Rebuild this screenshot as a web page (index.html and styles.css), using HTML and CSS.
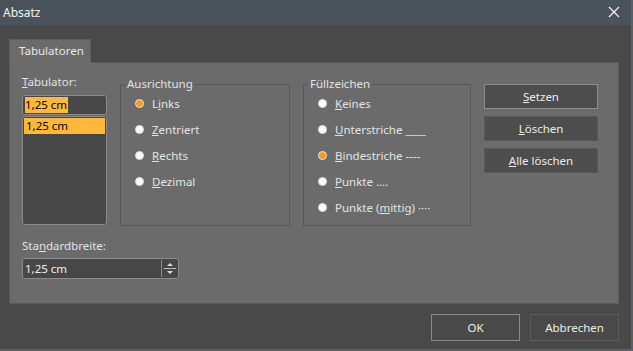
FILE: index.html
```html
<!DOCTYPE html>
<html lang="de">
<head>
	<meta charset="UTF-8">
	<title>Absatz</title>
	<link rel="stylesheet" href="styles.css">
</head>
<body>
<div class="window">
	<!-- Titelleiste -->
	<div class="titlebar">
		<span class="title">Absatz</span>
		<svg class="close" width="12" height="12" viewBox="0 0 12 12">
			<path d="M1 1 L11 11 M11 1 L1 11" stroke="#f2f2f2" stroke-width="1.2" fill="none"/>
		</svg>
	</div>
	<div class="content">
		<div class="tabs">
			<div class="tab">Tabulatoren</div>
		</div>
		<div class="panel">
			<div class="top-row">
				<div class="tab-col">
					<div class="label"><u>T</u>abulator:</div>
					<div class="tab-input"><span class="sel">1,25 cm</span></div>
					<div class="listbox">
						<div class="item selected">1,25 cm</div>
					</div>
				</div>
				<fieldset class="group align">
					<legend>Ausrichtung</legend>
					<div class="radio-row"><span class="radio checked"></span><span>L<u>i</u>nks</span></div>
					<div class="radio-row"><span class="radio"></span><span><u>Z</u>entriert</span></div>
					<div class="radio-row"><span class="radio"></span><span><u>R</u>echts</span></div>
					<div class="radio-row"><span class="radio"></span><span><u>D</u>ezimal</span></div>
				</fieldset>
				<fieldset class="group fill">
					<legend>Füllzeichen</legend>
					<div class="radio-row"><span class="radio"></span><span><u>K</u>eines</span></div>
					<div class="radio-row"><span class="radio"></span><span><u>U</u>nterstriche ____</span></div>
					<div class="radio-row"><span class="radio checked"></span><span><u>B</u>indestriche ----</span></div>
					<div class="radio-row"><span class="radio"></span><span><u>P</u>unkte ....</span></div>
					<div class="radio-row"><span class="radio"></span><span>Punkte (<u>m</u>ittig) ····</span></div>
				</fieldset>
				<div class="buttons">
					<div class="btn default"><u>S</u>etzen</div>
					<div class="btn"><u>L</u>öschen</div>
					<div class="btn"><u>A</u>lle löschen</div>
				</div>
			</div>
			<div class="label std-label">Sta<u>n</u>dardbreite:</div>
			<div class="spin">
				<span class="spin-value">1,25 cm</span>
				<span class="spin-arrows">
					<svg width="16" height="17" viewBox="0 0 16 17">
						<path d="M5 6 L8 3 L11 6 Z" fill="#dcdcdc"/>
						<path d="M2 8.5 L14 8.5" stroke="#bdbdbd" stroke-width="1"/>
						<path d="M5 11 L8 14 L11 11 Z" fill="#dcdcdc"/>
					</svg>
				</span>
			</div>
		</div>
		<div class="footer">
			<div class="btn big default">OK</div>
			<div class="btn big">Abbrechen</div>
		</div>
	</div>
</div>
</body>
</html>
```

FILE: styles.css
```css
*{
	box-sizing: border-box;
}
body{
	margin: 0;
	background: #494949;
	font-family: "Noto Sans", "Open Sans", sans-serif;
	font-size: 11.5px;
	color: #e4e4e4;
}
u{
	text-decoration: underline;
	text-underline-offset: 1px;
}
.window{
	width: 633px;
	height: 351px;
	background: #494949;
	border-right: 2px solid #57616b;
	border-bottom: 2px solid #57616b;
}
.titlebar{
	height: 25px;
	background: #4a535c;
	display: flex;
	align-items: center;
	justify-content: space-between;
	padding: 0 11px 1px 3px;
}
.title{
	color: #f2f2f2;
	font-size: 12px;
}
.close{
	display: block;
}
.content{
	padding: 14px 12px 0 9px;
}
.tabs{
	display: flex;
}
.tab{
	position: relative;
	z-index: 1;
	width: 82px;
	height: 24px;
	margin-bottom: -1px;
	padding: 2px 0 0 9px;
	line-height: 18px;
	background: #6b6b6b;
	border: 1px solid #5c5c5c;
	border-bottom: none;
	color: #e8e8e8;
}
.panel{
	height: 242px;
	background: #6b6b6b;
	border: 1px solid #5a5a5a;
	padding: 11px 0 0 12px;
}
.top-row{
	display: flex;
	align-items: flex-start;
}
.label{
	line-height: 16px;
	color: #e2e2e2;
}
.tab-col{
	width: 85px;
	margin-right: 13px;
}
.tab-input{
	margin-top: 5px;
	height: 20px;
	background: #474747;
	border: 1px solid #8a8a8a;
	border-radius: 3px;
	padding: 1px 0 0 2px;
	line-height: 16px;
}
.sel{
	background: #ffb83a;
	color: #000;
	display: inline-block;
	padding-right: 1px;
}
.listbox{
	margin-top: 1px;
	height: 109px;
	background: #474747;
	border: 1px solid #8a8a8a;
	border-radius: 3px;
	padding: 1px;
}
.item{
	height: 16px;
	line-height: 16px;
	padding-left: 2px;
}
.item.selected{
	background: #ffb83a;
	color: #000;
}
.group{
	margin: 2px 13px 0 0;
	height: 150px;
	padding: 0 0 0 14px;
	border: 1px solid #585858;
	min-width: 0;
}
.group legend{
	margin-left: -10px;
	padding: 0 2px;
	line-height: 16px;
	color: #e2e2e2;
}
.align{
	width: 170px;
}
.fill{
	width: 168px;
}
.radio-row{
	display: flex;
	align-items: center;
	gap: 8px;
	height: 22px;
	margin-bottom: 4px;
}
.radio{
	width: 9px;
	height: 9px;
	border-radius: 50%;
	background: #fafafa;
	border: 1px solid #dcdcdc;
	flex: none;
}
.radio.checked{
	background: #f59a24;
	border: 1px solid #f3e2c8;
}
.buttons{
	margin-top: 10px;
	width: 114px;
	display: flex;
	flex-direction: column;
	gap: 7px;
}
.btn{
	height: 25px;
	background: #4d4d4d;
	border: 1px solid #585858;
	display: flex;
	align-items: center;
	justify-content: center;
	color: #ececec;
	padding-bottom: 1px;
}
.btn.default{
	border-color: #8c8c8c;
}
.std-label{
	margin-top: 12px;
}
.spin{
	margin-top: 4px;
	width: 157px;
	height: 21px;
	background: #474747;
	border: 1px solid #8a8a8a;
	border-radius: 3px;
	display: flex;
	align-items: center;
}
.spin-value{
	flex: 1;
	padding-left: 2px;
	color: #f0f0f0;
}
.spin-arrows{
	width: 17px;
	height: 17px;
	border-left: 1px solid #8a8a8a;
	display: flex;
}
.footer{
	display: flex;
	justify-content: flex-end;
	gap: 10px;
	margin-top: 10px;
}
.btn.big{
	width: 89px;
	height: 27px;
	background: #494949;
	border-color: #5c5c5c;
}
.btn.big.default{
	border-color: #8a8a8a;
}
```
